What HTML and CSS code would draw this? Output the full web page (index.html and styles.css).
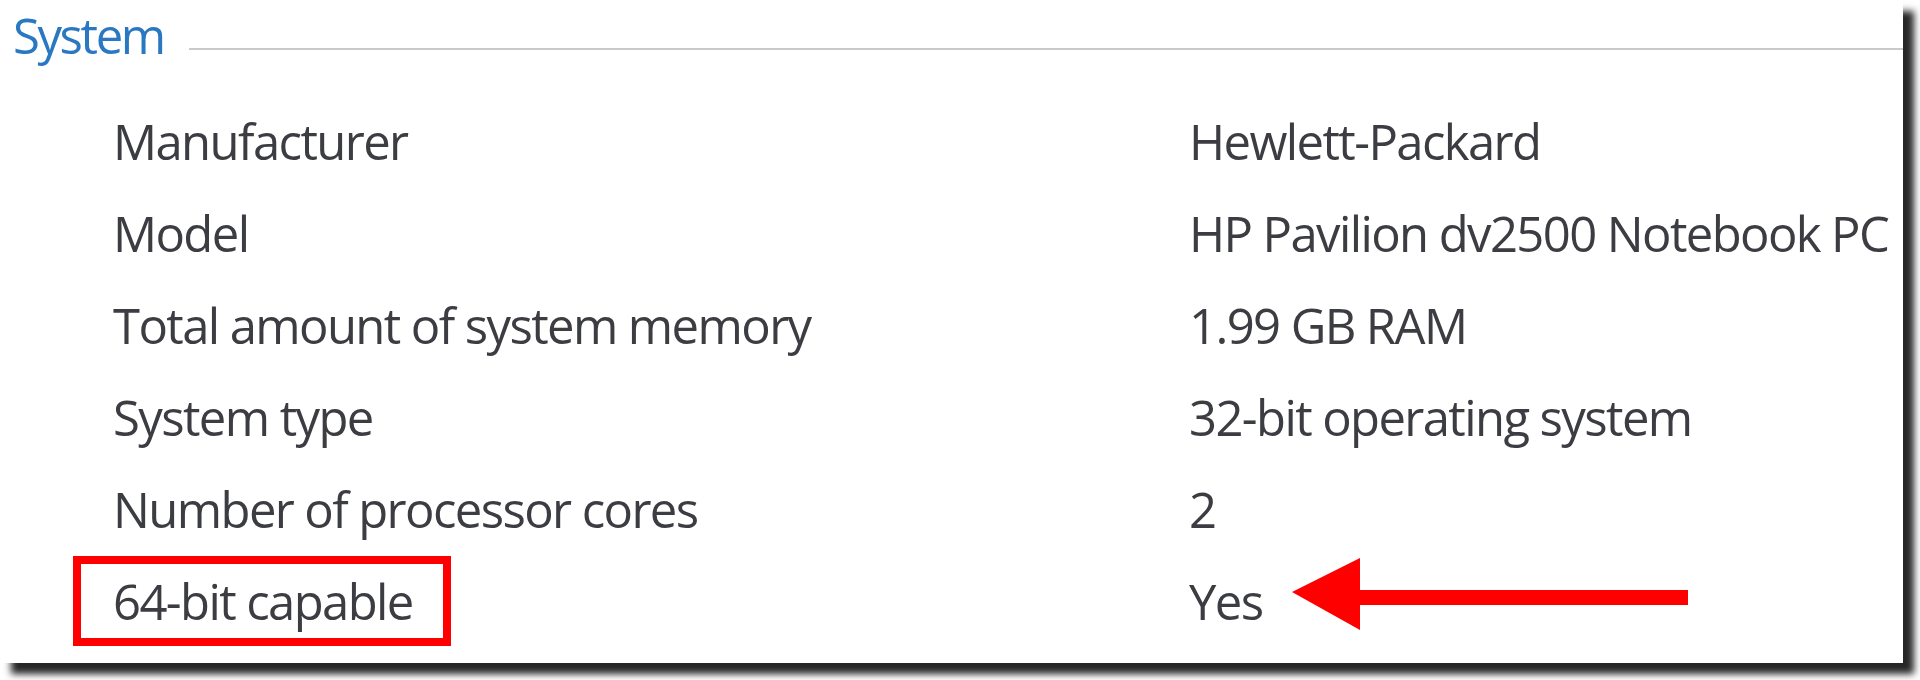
FILE: index.html
```html
<!DOCTYPE html>
<html>
<head>
<meta charset="utf-8">
<link rel="stylesheet" href="styles.css">
</head>
<body>
<div class="window">
  <div class="section-head">
    <span class="section-title">System</span>
    <span class="rule"></span>
  </div>
  <div class="props">
    <div class="label">Manufacturer</div>
    <div class="value">Hewlett-Packard</div>
    <div class="label">Model</div>
    <div class="value">HP Pavilion dv2500 Notebook PC</div>
    <div class="label">Total amount of system memory</div>
    <div class="value">1.99 GB RAM</div>
    <div class="label">System type</div>
    <div class="value">32-bit operating system</div>
    <div class="label">Number of processor cores</div>
    <div class="value">2</div>
    <div class="label"><span class="highlight">64-bit capable</span></div>
    <div class="value with-arrow">
      <span>Yes</span>
      <svg class="arrow" width="396" height="80" viewBox="0 0 396 80">
        <polygon points="0,35 68,1 68,73" fill="#ff0000"/>
        <rect x="66" y="33" width="330" height="15" fill="#ff0000"/>
      </svg>
    </div>
  </div>
</div>
</body>
</html>
```
FILE: styles.css
```css
html, body {
  margin: 0;
  padding: 0;
  background: #ffffff;
}

body {
  width: 1920px;
  height: 680px;
  overflow: hidden;
  font-family: "Open Sans", "Noto Sans", sans-serif;
}

.window {
  width: 1903px;
  height: 663px;
  background: #ffffff;
  box-shadow: 11px 11px 7px rgba(0, 0, 0, 0.85);
  overflow: hidden;
}

.section-head {
  display: flex;
  align-items: flex-start;
  padding-left: 13px;
  height: 70px;
}

.section-title {
  font-size: 49px;
  line-height: 70px;
  letter-spacing: -2.4px;
  color: #2b78c2;
}

.rule {
  flex: 1;
  height: 2px;
  margin-top: 48px;
  margin-left: 25px;
  background: #c9c9c9;
}

.props {
  display: grid;
  grid-template-columns: 1076px 1fr;
  padding-left: 113px;
  margin-top: 25px;
  font-size: 49px;
  line-height: 92px;
  letter-spacing: -1.6px;
  color: #3c3d42;
}

.label, .value {
  white-space: nowrap;
}

.highlight {
  display: inline-block;
  line-height: 74px;
  border: 8px solid #ff0000;
  padding: 0 30px 0 32px;
  margin-left: -40px;
}

.with-arrow {
  display: flex;
  align-items: center;
  gap: 30px;
}

.arrow {
  display: block;
  margin-top: -8px;
}
```
